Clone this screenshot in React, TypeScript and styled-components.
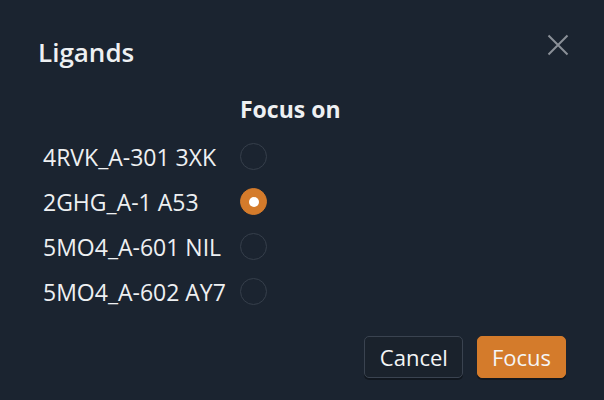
import React, { useState } from 'react'
import styled, { createGlobalStyle } from 'styled-components'

const GlobalStyle = createGlobalStyle`
  html, body {
    margin: 0;
    padding: 0;
    background: #1b2430;
  }
  * {
    box-sizing: border-box;
  }
`

const Dialog = styled.div`
  width: 604px;
  height: 400px;
  display: flex;
  flex-direction: column;
  background: #1b2430;
  color: #eef0f2;
  font-family: 'Open Sans', 'Noto Sans', sans-serif;
`

const Header = styled.header`
  display: flex;
  justify-content: space-between;
  align-items: flex-start;
  padding: 36px 35px 0 38px;
`

const Title = styled.h1`
  margin: 0;
  font-size: 26px;
  line-height: 32px;
  font-weight: 600;
`

const CloseButton = styled.button`
  margin-top: -2px;
  padding: 0;
  border: 0;
  background: transparent;
  color: #8b9098;
  cursor: pointer;
  width: 22px;
  height: 22px;
  display: flex;
`

const Table = styled.div`
  margin-top: 26px;
  padding-left: 43px;
  display: grid;
  grid-template-columns: 197px auto;
  grid-auto-rows: 45px;
  grid-template-rows: 40px;
`

const HeadCell = styled.div`
  font-size: 23px;
  line-height: 30px;
  font-weight: 700;
`

const Label = styled.div`
  display: flex;
  align-items: center;
  font-size: 23px;
  white-space: nowrap;
`

const RadioCell = styled.div`
  display: flex;
  align-items: center;
`

const Radio = styled.button<{ checked: boolean }>`
  width: 27px;
  height: 27px;
  border-radius: 50%;
  padding: 0;
  cursor: pointer;
  display: flex;
  align-items: center;
  justify-content: center;
  border: 1px solid ${p => (p.checked ? '#d47b2b' : '#363f4b')};
  background: ${p => (p.checked ? '#d47b2b' : 'transparent')};

  &::after {
    content: '';
    width: 10px;
    height: 10px;
    border-radius: 50%;
    background: #fff;
    display: ${p => (p.checked ? 'block' : 'none')};
  }
`

const Footer = styled.footer`
  margin-top: auto;
  display: flex;
  justify-content: flex-end;
  gap: 14px;
  padding: 0 38px 22px 0;
`

const Button = styled.button<{ primary?: boolean }>`
  height: 42px;
  padding: 0 14px 0 ${p => (p.primary ? 14 : 15)}px;
  border-radius: 5px;
  font-family: inherit;
  font-size: 22px;
  cursor: pointer;
  color: #f4f5f6;
  border: 1px solid ${p => (p.primary ? '#d47b2b' : '#3a4350')};
  background: ${p => (p.primary ? '#d47b2b' : '#1a222c')};
  box-shadow: 0 2px 0 rgba(0, 0, 0, 0.35);
`

const ligands = ['4RVK_A-301 3XK', '2GHG_A-1 A53', '5MO4_A-601 NIL', '5MO4_A-602 AY7']

export default function App() {
  const [selected, setSelected] = useState(1)

  return (
    <>
      <GlobalStyle />
      <Dialog>
        <Header>
          <Title>Ligands</Title>
          <CloseButton aria-label="Close">
            <svg width="22" height="22" viewBox="0 0 22 22" fill="none">
              <path d="M1.5 1.5 L20.5 20.5 M20.5 1.5 L1.5 20.5" stroke="currentColor" strokeWidth="2" />
            </svg>
          </CloseButton>
        </Header>

        <Table>
          <div />
          <HeadCell>Focus on</HeadCell>
          {ligands.map((name, i) => (
            <React.Fragment key={name}>
              <Label>{name}</Label>
              <RadioCell>
                <Radio checked={selected === i} onClick={() => setSelected(i)} aria-label={name} />
              </RadioCell>
            </React.Fragment>
          ))}
        </Table>

        <Footer>
          <Button>Cancel</Button>
          <Button primary>Focus</Button>
        </Footer>
      </Dialog>
    </>
  )
}
